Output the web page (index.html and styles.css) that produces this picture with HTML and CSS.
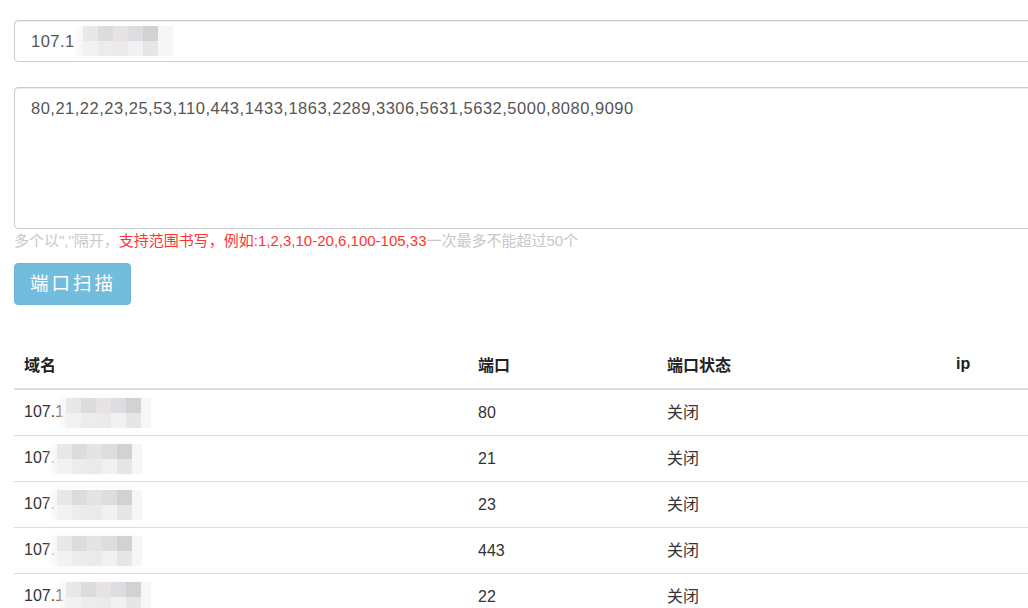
FILE: index.html
```html
<!DOCTYPE html>
<html lang="zh-CN">
<head>
  <meta charset="UTF-8">
  <title>端口扫描</title>
  <link rel="stylesheet" href="styles.css">
</head>
<body>
  <div class="container">
    <div class="form-group">
      <div class="form-control host">107.1<span class="mosaic m-input"><i class="a"></i><i class="b"></i><i class="c"></i><i class="d"></i><i class="e"></i><i class="f"></i><i class="g"></i><i class="h"></i><i class="i"></i><i class="j"></i></span></div>
    </div>

    <div class="form-group">
      <div class="form-control ports">80,21,22,23,25,53,110,443,1433,1863,2289,3306,5631,5632,5000,8080,9090</div>
      <p class="help">多个以","隔开，<span class="red">支持范围书写，例如:1,2,3,10-20,6,100-105,33</span>一次最多不能超过50个</p>
    </div>

    <button class="btn-scan">端口扫描</button>

    <table class="result">
      <thead>
        <tr>
          <th class="c-host">域名</th>
          <th class="c-port">端口</th>
          <th class="c-state">端口状态</th>
          <th>ip</th>
        </tr>
      </thead>
      <tbody>
        <tr><td>107.1<span class="mosaic"><i class="a"></i><i class="b"></i><i class="c"></i><i class="d"></i><i class="e"></i><i class="f"></i><i class="g"></i><i class="h"></i><i class="i"></i><i class="j"></i></span></td><td>80</td><td><span class="cn">关闭</span></td><td></td></tr>
        <tr><td>107.<span class="mosaic"><i class="a"></i><i class="b"></i><i class="c"></i><i class="d"></i><i class="e"></i><i class="f"></i><i class="g"></i><i class="h"></i><i class="i"></i><i class="j"></i></span></td><td>21</td><td><span class="cn">关闭</span></td><td></td></tr>
        <tr><td>107.<span class="mosaic"><i class="a"></i><i class="b"></i><i class="c"></i><i class="d"></i><i class="e"></i><i class="f"></i><i class="g"></i><i class="h"></i><i class="i"></i><i class="j"></i></span></td><td>23</td><td><span class="cn">关闭</span></td><td></td></tr>
        <tr><td>107.<span class="mosaic"><i class="a"></i><i class="b"></i><i class="c"></i><i class="d"></i><i class="e"></i><i class="f"></i><i class="g"></i><i class="h"></i><i class="i"></i><i class="j"></i></span></td><td>443</td><td><span class="cn">关闭</span></td><td></td></tr>
        <tr><td>107.1<span class="mosaic"><i class="a"></i><i class="b"></i><i class="c"></i><i class="d"></i><i class="e"></i><i class="f"></i><i class="g"></i><i class="h"></i><i class="i"></i><i class="j"></i></span></td><td>22</td><td><span class="cn">关闭</span></td><td></td></tr>
      </tbody>
    </table>
  </div>
</body>
</html>
```

FILE: styles.css
```css
html, body {
  overflow: hidden;
}
body {
  margin: 0;
  font-family: "Liberation Sans", Arial, "Noto Sans CJK SC", sans-serif;
  font-size: 16px;
  color: #333;
  background-color: #fff;
}
.container {
  width: 1180px;
  padding: 20px 14px;
}
.form-group {
  margin-bottom: 25px;
}
.form-control {
  box-sizing: border-box;
  width: 100%;
  border: 1px solid #ccc;
  border-radius: 4px;
  padding: 0 16px;
  font-size: 16.5px;
  letter-spacing: 0.5px;
  color: #555;
  box-shadow: inset 0 1px 1px rgba(0, 0, 0, 0.075);
}
.host {
  height: 42px;
  line-height: 40px;
  display: flex;
  align-items: center;
}
.ports {
  height: 142px;
  padding-top: 10px;
  line-height: 20px;
}
.help {
  margin: 2px 0 0;
  font-size: 15px;
  line-height: 20px;
  color: #c8c8c8;
}
.red {
  color: #f33;
}
.form-group:nth-child(2) {
  margin-bottom: 12px;
}
.btn-scan {
  display: block;
  height: 42px;
  padding: 0 14px 0 15px;
  border: 1px solid #6ab5d6;
  border-radius: 4px;
  background-color: #72bddd;
  color: #fff;
  font-family: "Liberation Sans", "Noto Sans CJK SC", sans-serif;
  font-size: 18.5px;
  letter-spacing: 3px;
  line-height: 38px;
}
.result {
  margin-top: 39px;
  width: 100%;
  border-collapse: collapse;
}
.result th,
.result td {
  text-align: left;
  padding: 0 10px;
  height: 45px;
  border-top: 1px solid #ddd;
  vertical-align: middle;
}
.result th {
  border-top: 0;
  border-bottom: 2px solid #ddd;
  font-weight: bold;
  height: 40px;
  padding-bottom: 4px;
  color: #222;
}
.cn {
  position: relative;
  top: -2px;
}
.c-host {
  width: 434px;
}
.c-port {
  width: 169px;
}
.c-state {
  width: 269px;
}
.mosaic {
  display: inline-grid;
  grid-template-columns: repeat(5, 15px);
  grid-template-rows: 15px 15px;
  vertical-align: middle;
  margin-left: 2px;
  background-color: #f6f6f6;
  padding: 0 10px 0 0;
  box-shadow: -6px 0 6px #f7f7f7;
}
.m-input {
  margin-left: 8px;
  padding: 0 15px 0 0;
}
.mosaic i { display: block; }
.mosaic .a { background: #e8e8e8; }
.mosaic .b { background: #dcdcdc; }
.mosaic .c { background: #e6e3e2; }
.mosaic .d { background: #dcdde0; }
.mosaic .e { background: #d2d2d2; }
.mosaic .f { background: #f2f2f2; }
.mosaic .g { background: #ececec; }
.mosaic .h { background: #eaeaea; }
.mosaic .i { background: #f1f1f1; }
.mosaic .j { background: #e6e6e6; }
```
